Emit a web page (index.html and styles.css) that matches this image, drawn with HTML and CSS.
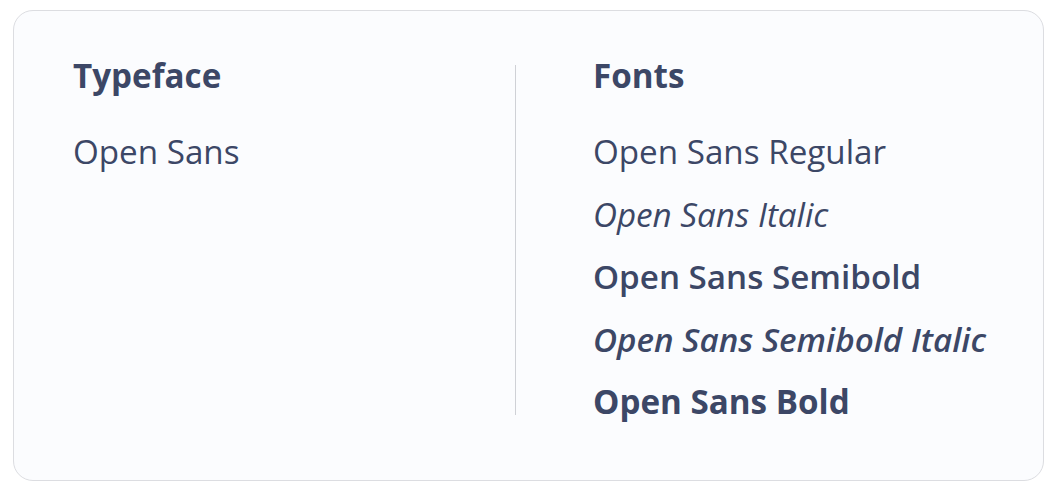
FILE: index.html
```html
<!DOCTYPE html>
<html lang="en">
<head>
<meta charset="utf-8">
<title>Typeface</title>
<link rel="stylesheet" href="styles.css">
</head>
<body>
<div class="card">
  <div class="col col-left">
    <div class="heading">Typeface</div>
    <div class="item regular">Open Sans</div>
  </div>
  <div class="divider"></div>
  <div class="col col-right">
    <div class="heading">Fonts</div>
    <div class="item regular">Open Sans Regular</div>
    <div class="item italic">Open Sans Italic</div>
    <div class="item semibold">Open Sans Semibold</div>
    <div class="item semibold italic">Open Sans Semibold Italic</div>
    <div class="item bold">Open Sans Bold</div>
  </div>
</div>
</body>
</html>
```
FILE: styles.css
```css
html, body {
  margin: 0;
  background: #ffffff;
}
body {
  padding: 10px 10px 0 13px;
  font-family: "Open Sans", "Liberation Sans", sans-serif;
  color: #3c4766;
}
.card {
  box-sizing: border-box;
  width: 1031px;
  height: 471px;
  border: 1px solid #dcdde1;
  border-radius: 20px;
  background: #fbfcfe;
  padding: 45px 0 0 59px;
  display: flex;
  align-items: flex-start;
}
.col {
  display: flex;
  flex-direction: column;
}
.col-left {
  width: 442px;
}
.col-right {
  padding-left: 77px;
}
.divider {
  width: 1px;
  height: 350px;
  margin-top: 9px;
  background: #cfd1d6;
}
.heading {
  font-size: 33.2px;
  line-height: 40px;
  font-weight: 700;
  margin-bottom: 36px;
}
.item {
  font-size: 33.2px;
  line-height: 40px;
  margin-bottom: 22.6px;
}
.regular { font-weight: 400; }
.italic { font-style: italic; }
.semibold { font-weight: 600; }
.bold { font-weight: 700; }
```
